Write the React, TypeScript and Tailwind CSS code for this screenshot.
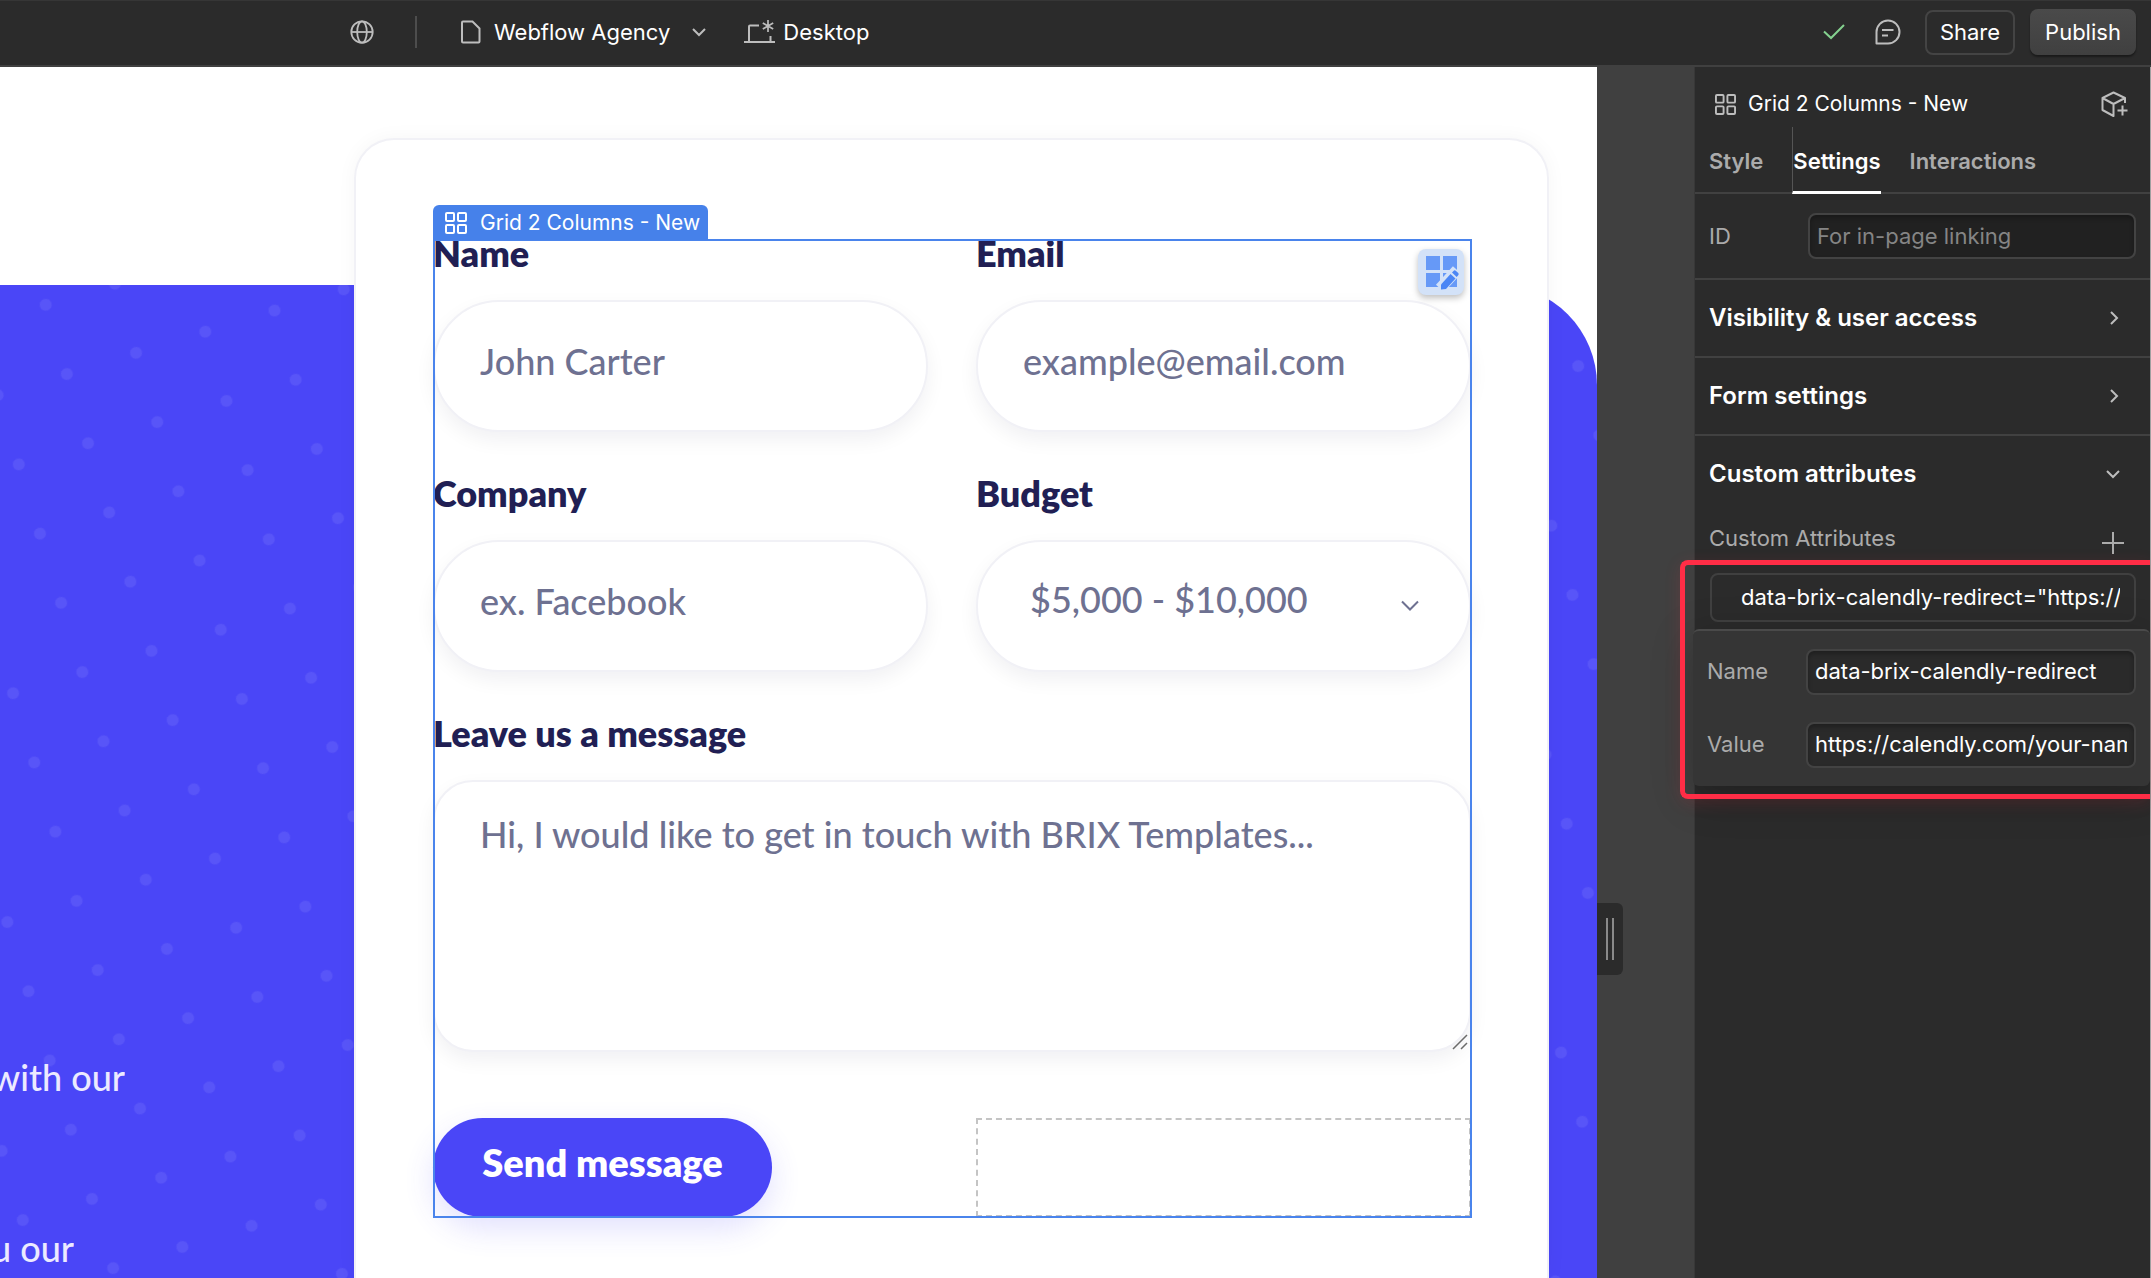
import { useState, type ReactNode } from "react";

const GridIcon = ({ className }: { className?: string }) => (
    <svg className={className} viewBox="0 0 22 22" fill="none" stroke="currentColor" strokeWidth="2">
        <rect x="1" y="1" width="8" height="8" rx="1" />
        <rect x="13" y="1" width="8" height="8" rx="1" />
        <rect x="1" y="13" width="8" height="8" rx="1" />
        <rect x="13" y="13" width="8" height="8" rx="1" />
    </svg>
);

const ChevronDown = ({ className }: { className?: string }) => (
    <svg className={className} viewBox="0 0 14 10" fill="none" stroke="currentColor" strokeWidth="2">
        <path d="M1 2l6 6 6-6" />
    </svg>
);

const ChevronRight = ({ className }: { className?: string }) => (
    <svg className={className} viewBox="0 0 10 14" fill="none" stroke="currentColor" strokeWidth="2">
        <path d="M2 1l6 6-6 6" />
    </svg>
);

const TopBar = () => (
    <header className="flex h-[67px] items-center border-t border-b-2 border-t-[#363636] border-b-[#404040] bg-[#2b2b2b] pr-[15px] pb-[2px] pl-[350px] text-[22px] leading-7 text-white">
        <button aria-label="Locale" className="text-[#bdbdbd]">
            <svg className="size-6" viewBox="0 0 24 24" fill="none" stroke="currentColor" strokeWidth="1.8">
                <circle cx="12" cy="12" r="10.7" />
                <ellipse cx="12" cy="12" rx="4.8" ry="10.7" />
                <path d="M1.3 12h21.4" />
            </svg>
        </button>
        <div className="ml-[41px] h-8 w-0.5 bg-[#4d4d4d]"></div>
        <button className="ml-[43px] flex items-center">
            <svg className="h-6 w-[22px] text-[#bdbdbd]" viewBox="0 0 22 24" fill="none" stroke="currentColor" strokeWidth="2">
                <path d="M2 2.5q0-1 1-1h9.5l7 7v13q0 1-1 1H3q-1 0-1-1z" />
            </svg>
            <span className="ml-3">Webflow Agency</span>
            <ChevronDown className="ml-[22px] h-2.5 w-3.5 text-[#bdbdbd]" />
        </button>
        <button className="ml-[38px] flex items-center">
            <svg className="h-6 w-[31px] text-[#bdbdbd]" viewBox="0 0 31 24" fill="none" stroke="currentColor" strokeWidth="2">
                <path d="M0 22h31M5 22V6.500q0-1 1-1h9M26.500 22v-6" />
                <path d="M24 0v12M18.800 3l10.400 6M29.200 3l-10.400 6" strokeWidth="1.700" />
            </svg>
            <span className="ml-2">Desktop</span>
        </button>
        <div className="ml-auto flex items-center">
            <svg className="h-4 w-[22px] text-[#84d18f]" viewBox="0 0 22 16" fill="none" stroke="currentColor" strokeWidth="2">
                <path d="M1 7.500l7 6.500L21 1" />
            </svg>
            <button aria-label="Comments" className="ml-[30px] text-[#bdbdbd]">
                <svg className="size-[26px]" viewBox="0 0 26 26" fill="none" stroke="currentColor" strokeWidth="2">
                    <path d="M1.500 24.500V13A11.500 11.500 0 1 1 13 24.500z" strokeLinejoin="round" />
                    <path d="M7 11h11.500M7 16.500h6" />
                </svg>
            </button>
            <button className="ml-6 h-[45px] w-[90px] rounded-lg border-2 border-[#444]">Share</button>
            <button className="ml-[15px] h-[46px] w-[106px] rounded-lg bg-linear-to-b from-[#4a4a4a] to-[#404040] shadow-[0_2px_2px_rgba(0,0,0,0.4)]">Publish</button>
        </div>
    </header>
);

const Field = ({ id, label, children }: { id: string; label: string; children: ReactNode }) => (
    <div className="flex flex-col">
        <label htmlFor={id} className="mb-[34px] text-[36px] leading-[26px] font-extrabold text-[#211f54]">{label}</label>
        {children}
    </div>
);

const inputStyle = "h-[132px] w-full rounded-full border-2 border-[#f1f1f6] bg-white pr-10 pb-2.5 pl-[45px] text-[36px] font-medium text-[#6e7191] shadow-[0_8px_20px_rgba(20,20,43,0.06)] outline-0 placeholder:text-[#6e7191]";

const ContactForm = () => {
    const [budget, setBudget] = useState<string>("5-10");

    return (
        <form className="relative grid grid-cols-2 gap-12">
            <Field id="name" label="Name">
                <input id="name" type="text" placeholder="John Carter" className={inputStyle} />
            </Field>
            <Field id="email" label="Email">
                <input id="email" type="email" placeholder="example@email.com" className={inputStyle} />
            </Field>
            <Field id="company" label="Company">
                <input id="company" type="text" placeholder="ex. Facebook" className={inputStyle} />
            </Field>
            <Field id="budget" label="Budget">
                <div className="relative">
                    <select
                        id="budget"
                        value={budget}
                        onChange={(e) => setBudget(e.target.value)}
                        className="h-[132px] w-full appearance-none rounded-full border-2 border-[#f1f1f6] bg-white pr-20 pb-3.5 pl-[52px] text-[36px] font-medium text-[#6e7191] shadow-[0_8px_20px_rgba(20,20,43,0.06)] outline-0"
                    >
                        <option value="5-10">$5,000 - $10,000</option>
                    </select>
                    <svg className="pointer-events-none absolute top-[60px] right-[52px] h-3 w-[18px] text-[#6e7191]" viewBox="0 0 18 12" fill="none" stroke="currentColor" strokeWidth="2">
                        <path d="M1 1.500l8 8 8-8" />
                    </svg>
                </div>
            </Field>
            <div className="col-span-2 pb-[18px]">
                <Field id="message" label="Leave us a message">
                    <div className="relative flex">
                        <textarea
                            id="message"
                            placeholder="Hi, I would like to get in touch with BRIX Templates..."
                            className="h-[272px] w-full resize-none rounded-[40px] border-2 border-[#f1f1f6] bg-white px-[45px] pt-[31px] text-[36px] leading-[42px] font-medium text-[#6e7191] shadow-[0_8px_20px_rgba(20,20,43,0.06)] outline-0 placeholder:text-[#6e7191]"
                        ></textarea>
                        <svg className="pointer-events-none absolute right-[3px] bottom-0.5 size-4" viewBox="0 0 16 16" fill="none" stroke="#6b6b6b" strokeWidth="1.5">
                            <path d="M1 15L15 1M9 15l6-6" />
                        </svg>
                    </div>
                </Field>
            </div>
            <button type="button" className="h-[99px] w-[339px] rounded-full bg-[#4a46f7] pb-2.5 text-[38px] font-extrabold text-white shadow-[0_12px_30px_rgba(74,70,247,0.16)]">
                Send message
            </button>
            <div className="border-2 border-dashed border-[#c4c4c4]"></div>

            {/* selection overlay */}
            <div className="pointer-events-none absolute -inset-y-px -right-px left-0 border-2 border-[#4a84ec]"></div>
            <div className="absolute -top-[35px] left-0 flex h-[35px] items-center rounded-t-md bg-[#4681ea] pr-2 pl-3 font-[Inter] text-[21px] text-white">
                <GridIcon className="mr-[13px] size-[22px]" />
                Grid 2 Columns - New
            </div>
            <button type="button" aria-label="Edit grid" className="absolute top-[9px] right-[7px] flex size-[46px] items-center justify-center rounded-lg bg-[#d3e2f8] shadow-[0_3px_6px_rgba(0,0,0,0.25)]">
                <svg className="size-9" viewBox="0 0 36 36" fill="#6699f7">
                    <path d="M3 2h14v14H3zM20 2h14v14H20zM3 19h14v14H3zM20 19h14v14H20z" />
                    <path d="M17 34.500L34 16" stroke="#d3e2f8" strokeWidth="11" />
                    <path d="M18 35.500v-5L27.500 20l5 4.500L23 35z" fill="#4a86f5" />
                    <path d="M29 18.500l1.500-1.600q1.200-1.200 2.500 0l2 1.800q1.300 1.300.2 2.600l-1.500 1.700z" fill="#4a86f5" />
                </svg>
            </button>
        </form>
    );
};

const Canvas = () => (
    <main className="grid min-w-0 flex-1 overflow-hidden bg-white font-[Lato,sans-serif]">
        {/* blue section behind the card */}
        <div className="col-start-1 row-start-1 mt-[218px] overflow-hidden rounded-tr-[100px] bg-[#4a46f7]">
            <svg className="h-full w-full">
                <defs>
                    <pattern id="dots" width="72.38" height="72.38" patternUnits="userSpaceOnUse" patternTransform="translate(45.7 19.8) rotate(-17) translate(-36.19 -36.19)">
                        <circle cx="36.19" cy="36.19" r="6" fill="#fff" fillOpacity="0.08" />
                    </pattern>
                </defs>
                <rect width="100%" height="100%" fill="url(#dots)" />
            </svg>
        </div>
        <div className="z-10 col-start-1 row-start-1 flex pr-12">
            <div className="flex w-[354px] shrink-0 flex-col items-start pt-[982px] text-[36px] leading-[57px] font-medium text-[#eceaff]">
                <p className="flex w-[125px] justify-end overflow-hidden whitespace-nowrap">with our</p>
                <p className="mt-[114px] flex w-[74px] justify-end overflow-hidden whitespace-nowrap">you our</p>
            </div>
            <div className="mt-[71px] min-w-0 flex-1 rounded-t-[40px] border-2 border-b-0 border-[#f1f1f6] bg-white pt-[100px] pr-[76px] pl-[77px] shadow-[0_0_20px_rgba(20,20,43,0.04)]">
                <ContactForm />
            </div>
        </div>
    </main>
);

const fieldStyle = "h-[46px] min-w-0 flex-1 rounded-lg border-2 border-[#434343] px-[7px] text-[22px] outline-0 shadow-[inset_0_3px_4px_rgba(0,0,0,0.25)]";

const SettingsPanel = () => {
    const [name, setName] = useState<string>("data-brix-calendly-redirect");
    const [value, setValue] = useState<string>("https://calendly.com/your-name");

    return (
        <aside className="w-[457px] shrink-0 border-r border-l border-r-[#a0a0a0] border-l-[#383838] bg-[#2b2b2b] text-[22px] leading-7 text-white">
            <div className="flex h-[60px] items-center pt-3.5 pr-[22px] pl-5">
                <GridIcon className="mr-3 size-[21px] text-[#bdbdbd]" />
                <h2 className="text-[21px]">Grid 2 Columns - New</h2>
                <button aria-label="Create component" className="ml-auto text-[#bdbdbd]">
                    <svg className="size-[27px]" viewBox="0 0 27 27" fill="none" stroke="currentColor" strokeWidth="2" strokeLinejoin="round">
                        <path d="M24 12V7L12.500 1.500 1.500 7v12l11 6V13L1.500 7M12.500 13L24 7M21.500 14.500v10M16.500 19.500h10" />
                    </svg>
                </button>
            </div>
            <nav className="flex h-[67px] items-stretch border-b-2 border-[#414141] pl-3.5 font-semibold text-[#ababab]">
                <button className="pt-0.5">Style</button>
                <button className="-mb-0.5 ml-[29px] border-b-[3px] border-l border-b-white border-l-[#555] pt-[3px] text-white">Settings</button>
                <button className="ml-[29px] pt-0.5">Interactions</button>
            </nav>
            <div className="flex h-[86px] items-center border-b-2 border-[#414141] pr-3.5 pl-3.5">
                <label htmlFor="element-id" className="w-[99px] text-[#ababab]">ID</label>
                <input id="element-id" placeholder="For in-page linking" className={`${fieldStyle} bg-[#212121] placeholder:text-[#858585]`} />
            </div>
            <button className="flex h-[78px] w-full items-center justify-between border-b-2 border-[#414141] pr-[31px] pl-3.5 text-2xl font-semibold">
                Visibility & user access
                <ChevronRight className="h-3.5 w-2.5 text-[#bdbdbd]" />
            </button>
            <button className="flex h-[78px] w-full items-center justify-between border-b-2 border-[#414141] pr-[31px] pl-3.5 text-2xl font-semibold">
                Form settings
                <ChevronRight className="h-3.5 w-2.5 text-[#bdbdbd]" />
            </button>
            <button className="flex h-[76px] w-full items-center justify-between pr-[30px] pl-3.5 text-2xl font-semibold">
                Custom attributes
                <ChevronDown className="h-2.5 w-3.5 text-[#bdbdbd]" />
            </button>
            <div className="flex h-[61px] items-center justify-between pr-[26px] pl-3.5 text-[#ababab]">
                <h3 className="pb-[9px]">Custom Attributes</h3>
                <button aria-label="Add attribute">
                    <svg className="size-[22px]" viewBox="0 0 22 22" fill="none" stroke="currentColor" strokeWidth="2">
                        <path d="M11 0v22M0 11h22" />
                    </svg>
                </button>
            </div>
            <div className="relative">
                <div className="mr-3.5 ml-[15px] flex h-[49px] items-center rounded-lg border-2 border-[#404040] pr-3.5 pb-0.5 pl-[29px]">
                    <span className="overflow-hidden whitespace-nowrap">data-brix-calendly-redirect="https://calendly.com/your-name"</span>
                </div>
                <div className="mt-[7px] -ml-0.5 flex flex-col gap-[27px] rounded-md border-t-2 border-[#4a4a4a] bg-[#353535] px-3.5 py-[18px] shadow-[0_10px_40px_rgba(0,0,0,0.25)]">
                    <div className="flex items-center">
                        <label htmlFor="attr-name" className="w-[99px] pb-0.5 text-[#ababab]">Name</label>
                        <input id="attr-name" value={name} onChange={(e) => setName(e.target.value)} className={`${fieldStyle} bg-[#2a2a2a] pb-0.5`} />
                    </div>
                    <div className="flex items-center">
                        <label htmlFor="attr-value" className="w-[99px] pb-0.5 text-[#ababab]">Value</label>
                        <input id="attr-value" value={value} onChange={(e) => setValue(e.target.value)} className={`${fieldStyle} bg-[#2a2a2a] pb-0.5`} />
                    </div>
                </div>
                <div className="pointer-events-none absolute -inset-y-[13px] right-0 -left-[15px] rounded-l-lg border-[5px] border-r-0 border-[#ff2d46] shadow-[0_4px_16px_rgba(255,45,70,0.15)]"></div>
            </div>
        </aside>
    );
};

const App = () => {
    return (
        <div className="flex h-screen min-h-[600px] flex-col overflow-hidden bg-[#404040] font-[Inter,sans-serif]">
            <TopBar />
            <div className="flex min-h-0 flex-1">
                <Canvas />
                <div className="flex w-[97px] shrink-0 flex-col pt-[836px]">
                    <button aria-label="Resize canvas" className="flex h-[72px] w-[26px] items-center justify-center gap-1 rounded-r-md bg-[#2b2b2b]">
                        <span className="h-[42px] w-0.5 bg-[#8a8a8a]"></span>
                        <span className="h-[42px] w-0.5 bg-[#8a8a8a]"></span>
                    </button>
                </div>
                <SettingsPanel />
            </div>
        </div>
    );
};

export default App;
